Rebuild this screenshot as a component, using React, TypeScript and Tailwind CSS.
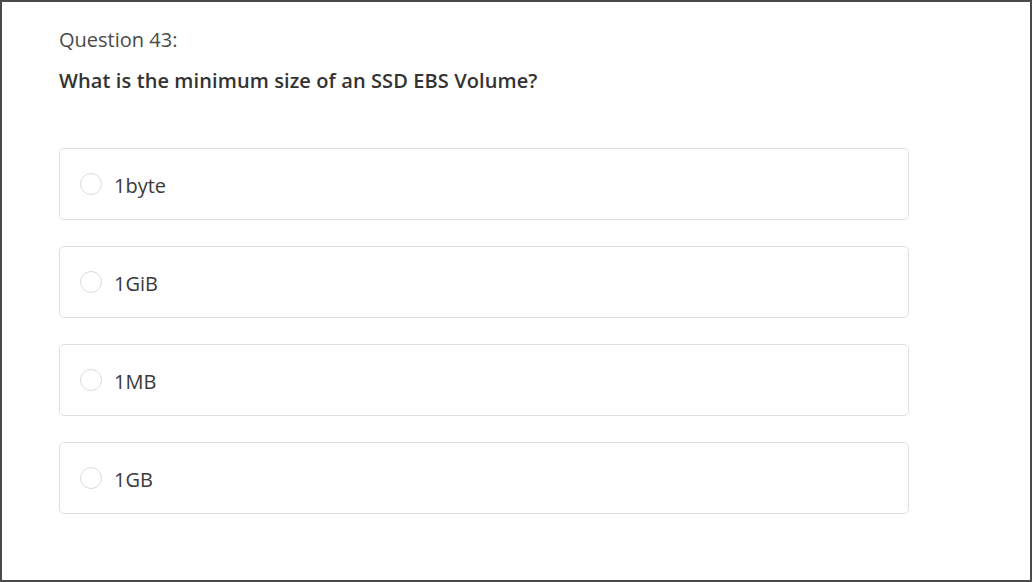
import React from 'react';

const options = ['1byte', '1GiB', '1MB', '1GB'];

function Option({ label }: { label: string }) {
  return (
    <div className="flex items-center h-[72px] border border-[#e0e0e0] rounded-[5px] pl-[20px]">
      <span className="w-[22px] h-[22px] rounded-full border border-[#dcdcdc] bg-white shrink-0" />
      <span className="ml-[12px] mt-[4px] text-[20px] leading-[26px] text-[#3a3a3a]">{label}</span>
    </div>
  );
}

export default function App(): React.ReactElement {
  return (
    <div
      className="w-[1032px] h-[582px] border-2 border-[#4a4a4a] bg-white pl-[57px] pr-[121px] pt-[23px]"
      style={{ fontFamily: '"Open Sans", sans-serif' }}
    >
      <p className="text-[20px] leading-[30px] text-[#4a4a4a]">Question 43:</p>
      <p className="mt-[13px] text-[20px] leading-[26px] font-semibold text-[#333] tracking-[0.1px]">
        What is the minimum size of an SSD EBS Volume?
      </p>
      <div className="mt-[54px] flex flex-col gap-[26px]">
        {options.map((o) => (
          <Option key={o} label={o} />
        ))}
      </div>
    </div>
  );
}
